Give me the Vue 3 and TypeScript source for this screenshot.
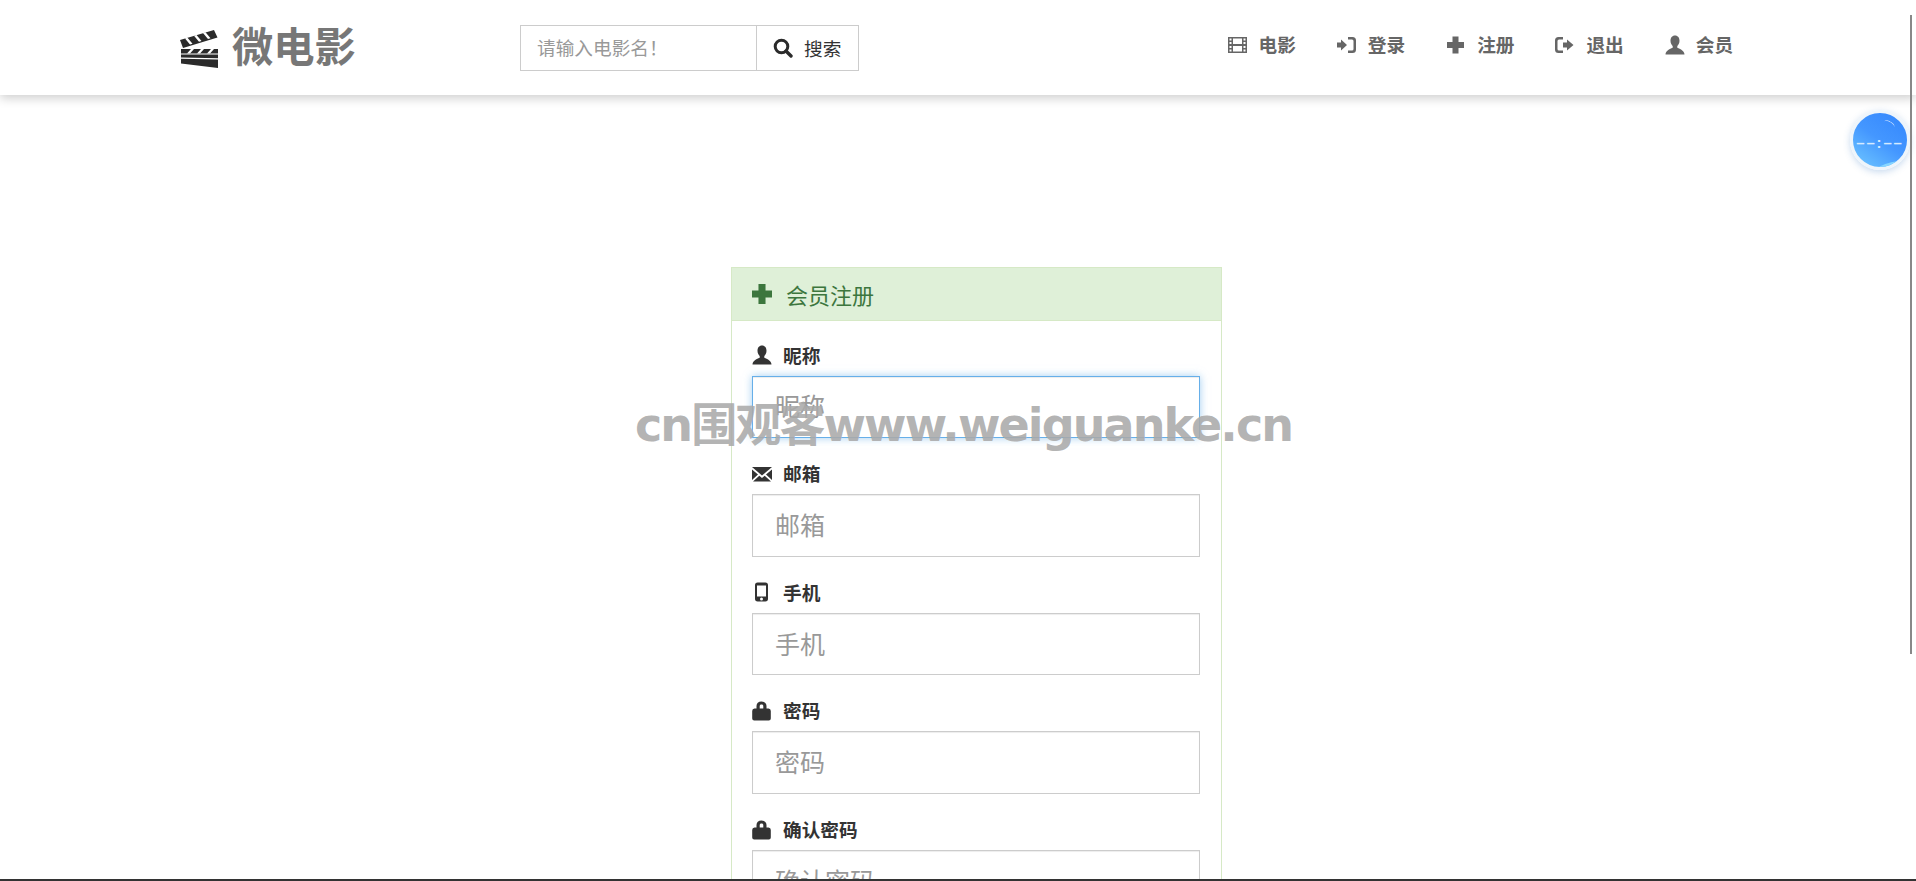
<script setup lang="ts">
interface NavItem { label: string; icon: string }
interface Field { label: string; icon: string; focus?: boolean }

const navItems: NavItem[] = [
  { label: '电影', icon: 'film' },
  { label: '登录', icon: 'login' },
  { label: '注册', icon: 'plus' },
  { label: '退出', icon: 'logout' },
  { label: '会员', icon: 'user' },
]
const fields: Field[] = [
  { label: '昵称', icon: 'user', focus: true },
  { label: '邮箱', icon: 'mail' },
  { label: '手机', icon: 'phone' },
  { label: '密码', icon: 'lock' },
  { label: '确认密码', icon: 'lock' },
]
const paths: Record<string, string> = {
  film: 'M0 2h19v16H0V2zm1.500 1.500v2h2v-2h-2zm0 3.500v2h2V7h-2zm0 4v2h2v-2h-2zm0 3.500v2h2v-2h-2zm14-11v2h2v-2h-2zm0 3.500v2h2V7h-2zm0 4v2h2v-2h-2zm0 3.500v2h2v-2h-2zM5 3.500V9h9V3.500H5zM5 11v5.500h9V11H5z',
  login: 'M0 7.500h4v-3l6 5.500-6 5.500v-3H0zM11 2h4.500A3.500 3.500 0 0 1 19 5.500v9a3.500 3.500 0 0 1-3.500 3.500H11v-2.500h4a1.500 1.500 0 0 0 1.500-1.500V6A1.500 1.500 0 0 0 15 4.500h-4z',
  plus: 'M6.500 1.500h6V7H18v6h-5.500v5.500h-6V13H1V7h5.500z',
  logout: 'M8 2H3.500A3.500 3.500 0 0 0 0 5.500v9A3.500 3.500 0 0 0 3.500 18H8v-2.500H4A1.500 1.500 0 0 1 2.500 14V6A1.500 1.500 0 0 1 4 4.500h4zM8 7.500h4v-3l6.500 5.500-6.500 5.500v-3H8z',
  user: 'M10 .5c3 0 4.500 2.300 4.500 5.200 0 2.300-1 4.200-2.200 5.300v1.700c1.400.8 7.200 2.300 7.200 6.800H.5c0-4.500 5.800-6 7.200-6.800V11c-1.200-1.100-2.200-3-2.200-5.300C5.500 2.800 7 .5 10 .5z',
  mail: 'M0 3h20L10 11.500 0 3zM0 5.500l6 5.100-6 5.400V5.500zm20 0V16l-6-5.400 6-5.100zM7.300 11.700 10 14l2.700-2.300L19 17.500H1l6.300-5.800z',
  phone: 'M6 .5h7A2.800 2.800 0 0 1 16 3.300v13.400a2.800 2.800 0 0 1-3 2.800H6a2.800 2.800 0 0 1-3-2.800V3.300A2.800 2.800 0 0 1 6 .5zM5 3.500v11h9v-11H5zm4.500 12a1.500 1.500 0 1 0 0 3 1.500 1.500 0 0 0 0-3z',
  lock: 'M9.500 .5c3.200 0 5 1.900 5 4.500v2.500H16.500a2.500 2.500 0 0 1 2.300 2.500v7.500a2 2 0 0 1-2 2H2.200a2 2 0 0 1-2-2V10a2.500 2.500 0 0 1 2.300-2.500h2V5c0-2.600 1.800-4.500 5-4.500zm0 3c-1.200 0-1.800.7-1.800 1.700v2.300h3.600V5.200c0-1-.6-1.700-1.800-1.700z',
}
</script>

<template>
  <div class="page">
    <header class="nav">
      <div class="brand">
        <svg class="logo" viewBox="0 0 38 38" aria-hidden="true">
          <path fill="#2b2b2b" d="M0 10 34 0l3.500 7.500L3 18z" />
          <path fill="#fff" d="M5 8.500l5 6 2.500-.8-5-6zM14 5.800l5 6 2.500-.8-5-6zM23 3.100l5 6 2.500-.8-5-6z" />
          <path fill="#2b2b2b" d="M1 19h37v4.500H1zM1 24.500h37v13.500L1 33.500z" />
          <path fill="#fff" d="M7 23.500h3l4-4.500h-3zM17 23.500h3l4-4.500h-3zM27 23.500h3l4-4.500h-3zM1 27.500l37 .8v1.200l-37-.8z" />
        </svg>
        <span class="brand-text">微电影</span>
      </div>
      <form class="search" @submit.prevent>
        <input class="search-input" type="text" placeholder="请输入电影名！" />
        <button class="search-btn" type="button">
          <svg class="search-icon" viewBox="0 0 20 20" aria-hidden="true">
            <circle cx="8.500" cy="8.500" r="6.300" fill="none" stroke="#2b2b2b" stroke-width="3" />
            <path d="M13 13 18 18" stroke="#2b2b2b" stroke-width="3.400" stroke-linecap="round" />
          </svg>
          <span>搜索</span>
        </button>
      </form>
      <nav class="links">
        <a v-for="item in navItems" :key="item.label" class="link">
          <svg class="link-icon" viewBox="0 0 20 20" aria-hidden="true"><path fill="currentColor" fill-rule="evenodd" :d="paths[item.icon]" /></svg>
          <span>{{ item.label }}</span>
        </a>
      </nav>
    </header>

    <main class="content">
      <section class="panel">
        <h3 class="panel-title">
          <svg class="title-icon" viewBox="1 1.500 17 17" aria-hidden="true"><path fill="currentColor" :d="paths.plus" /></svg>
          <span>会员注册</span>
        </h3>
        <div class="panel-body">
          <div v-for="f in fields" :key="f.label" class="field">
            <label class="label">
              <svg class="label-icon" viewBox="0 0 20 20" aria-hidden="true"><path fill="currentColor" fill-rule="evenodd" :d="paths[f.icon]" /></svg>
              <span>{{ f.label }}</span>
            </label>
            <input class="control" :class="{ focus: f.focus }" type="text" :placeholder="f.label" />
          </div>
        </div>
      </section>
    </main>

    <div class="watermark">cn围观客www.weiguanke.cn</div>

    <div class="clock">
      <span class="clock-arc"></span>
      <span class="clock-wave"></span>
      <span class="clock-time">––:––</span>
    </div>
    <div class="edge-right"></div>
    <div class="edge-bottom"></div>
  </div>
</template>

<style>
html, body { margin: 0; height: 100%; overflow: hidden; background: #fff; }
</style>

<style scoped>
.page {
  position: relative;
  height: 881px;
  overflow: hidden;
  font-family: "Liberation Sans", "Noto Sans CJK SC", sans-serif;
  color: #333;
}
.nav {
  display: flex;
  align-items: center;
  height: 95px;
  box-sizing: border-box;
  padding-left: 180px;
  background: #fff;
  box-shadow: 0 3px 10px rgba(0, 0, 0, 0.2);
}
.brand { display: flex; align-items: center; width: 340px; }
.logo { width: 38px; height: 38px; margin-right: 14px; margin-top: 3px; }
.brand-text { font-size: 41.300px; font-weight: 700; color: #777; line-height: 46px; }
.search { display: flex; height: 46px; width: 339px; }
.search-input {
  width: 236px;
  box-sizing: border-box;
  border: 1px solid #ccc;
  border-right: 0;
  padding: 3px 16px 0;
  font: 18.670px "Liberation Sans", "Noto Sans CJK SC", sans-serif;
  outline: none;
}
.search-input::placeholder { color: #999; }
.search-btn {
  display: flex;
  align-items: center;
  gap: 11px;
  width: 103px;
  box-sizing: border-box;
  padding: 0 0 0 16px;
  border: 1px solid #ccc;
  background: #fff;
  font: 18.670px "Liberation Sans", "Noto Sans CJK SC", sans-serif;
  color: #333;
}
.search-icon { width: 20px; height: 20px; }
.links { display: flex; margin-left: 368.500px; gap: 41px; margin-top: -3px; }
.link { display: flex; align-items: center; gap: 11px; font-size: 18.670px; font-weight: 700; color: #666; line-height: 24px; }
.link-icon { width: 20px; height: 20px; margin-top: -2px; }
.content { display: flex; padding: 172px 0 0 731px; }
.panel {
  width: 491px;
  box-sizing: border-box;
  border: 1px solid #d6e9c6;
}
.panel-title {
  display: flex;
  align-items: center;
  gap: 14px;
  height: 53px;
  margin: 0;
  box-sizing: border-box;
  padding: 0 20px;
  background: #dff0d8;
  border-bottom: 1px solid #d6e9c6;
  color: #3c763d;
  font-size: 22px;
  font-weight: 400;
}
.title-icon { width: 20px; height: 20px; }
.panel-body { padding: 25.500px 21px 0 20px; }
.field { margin-bottom: 27px; }
.label { display: flex; align-items: center; gap: 11px; height: 20px; margin-bottom: 9px; font-size: 18.670px; font-weight: 700; color: #333; line-height: 20px; }
.label-icon { width: 20px; height: 20px; margin-top: -3px; }
.control {
  display: block;
  width: 100%;
  height: 62.670px;
  box-sizing: border-box;
  padding: 2px 22px 0;
  border: 1px solid #ccc;
  background: #fff;
  box-shadow: inset 0 1px 1px rgba(0, 0, 0, 0.075);
  font: 25px "Liberation Sans", "Noto Sans CJK SC", sans-serif;
  outline: none;
}
.control::placeholder { color: #999; }
.control.focus {
  border-color: #66afe9;
  box-shadow: inset 0 1px 1px rgba(0, 0, 0, 0.075), 0 0 8px rgba(102, 175, 233, 0.6);
}
.watermark {
  position: absolute;
  left: 635px;
  top: 395px;
  font-family: "DejaVu Sans", "Noto Sans CJK SC", sans-serif;
  font-size: 46px;
  letter-spacing: -1.900px;
  line-height: 60px;
  font-weight: 700;
  color: rgba(170, 170, 170, 0.9);
  white-space: nowrap;
}
.clock {
  position: absolute;
  left: 1850px;
  top: 110px;
  width: 60px;
  height: 60px;
  box-sizing: border-box;
  border: 3px solid #eef5fb;
  border-radius: 50%;
  background: linear-gradient(215deg, #3386fd 0%, #4497ff 50%, #70c8ff 100%);
  box-shadow: 0 2px 7px rgba(70, 130, 200, 0.3);
  overflow: hidden;
}
.clock-arc {
  position: absolute;
  left: 30px;
  top: 8px;
  width: 12px;
  height: 6px;
  border-top: 1.500px solid rgba(255, 255, 255, 0.7);
  border-radius: 50%;
  transform: rotate(30deg);
}
.clock-wave {
  position: absolute;
  left: 20px;
  bottom: -10px;
  width: 40px;
  height: 15px;
  background: #86d6ff;
  border-radius: 50%;
  transform: rotate(-12deg);
}
.clock-time {
  position: absolute;
  left: 0;
  right: 0;
  top: 20px;
  text-align: center;
  font-size: 15px;
  font-weight: 700;
  letter-spacing: 1.800px;
  line-height: 20px;
  font-family: "Liberation Sans", sans-serif;
  color: #d6eaff;
  white-space: nowrap;
}
.edge-right {
  position: absolute;
  left: 1910px;
  top: 15px;
  height: 639px;
  width: 2px;
  background: #888;
}
.edge-bottom {
  position: absolute;
  left: 0;
  right: 0;
  bottom: 0;
  height: 2px;
  background: #333;
}
</style>
